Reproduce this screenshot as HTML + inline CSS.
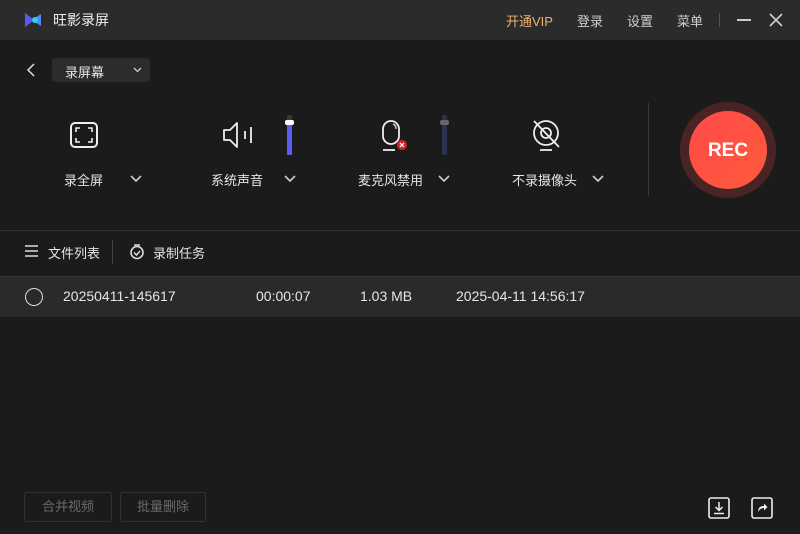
<!DOCTYPE html>
<html><head><meta charset="utf-8"><style>
*{margin:0;padding:0;box-sizing:border-box}
body{width:800px;height:534px;background:#1b1b1b;font-family:"Liberation Sans","Noto Sans CJK SC",sans-serif;color:#e6e6e6;position:relative;overflow:hidden;font-size:13px}
.a{position:absolute;white-space:nowrap}
.title{left:0;top:0;width:800px;height:40px;background:#2b2b2b}
svg{position:absolute;overflow:visible}
.chev{width:10px;height:6px}
</style></head><body>
<div class="a title"></div>
<svg style="left:24px;top:12px" width="18" height="16" viewBox="0 0 18 16"><path d="M1 1 L1 15 L9 9 L9 7Z" fill="#5a5cf0"/><path d="M17 2 L17 14 L9 9 L9 7Z" fill="#4a8cf5"/><circle cx="11" cy="8" r="3" fill="#2fd2ee"/></svg>
<div class="a" style="left:53px;top:10px;font-size:14px;color:#f0f0f0">旺影录屏</div>
<div class="a" style="left:506px;top:11px;color:#e9b56e">开通VIP</div>
<div class="a" style="left:577px;top:11px;color:#cfcfcf">登录</div>
<div class="a" style="left:627px;top:11px;color:#cfcfcf">设置</div>
<div class="a" style="left:677px;top:11px;color:#cfcfcf">菜单</div>
<div class="a" style="left:719px;top:13px;width:1px;height:14px;background:#555"></div>
<div class="a" style="left:737px;top:19px;width:14px;height:2px;background:#ccc"></div>
<svg style="left:769px;top:13px" width="14" height="14"><path d="M1 1L13 13M13 1L1 13" stroke="#ccc" stroke-width="1.6"/></svg>

<svg style="left:27px;top:63px" width="8" height="14"><path d="M7 1L1 7L7 13" stroke="#ddd" stroke-width="1.5" fill="none"/></svg>
<div class="a" style="left:52px;top:58px;width:98px;height:24px;background:#2c2c2c;border-radius:3px"></div>
<div class="a" style="left:65px;top:62px;color:#e6e6e6">录屏幕</div>
<svg style="left:133px;top:67px" width="9" height="6"><path d="M1 1L4.5 4.5L8 1" stroke="#ccc" stroke-width="1.3" fill="none"/></svg>

<!-- full screen -->
<svg style="left:70px;top:122px" width="28" height="26"><rect x="1" y="1" width="26" height="24" rx="4" stroke="#eee" stroke-width="2" fill="none"/><path d="M6 10V6H10M18 6H22V10M22 16V20H18M10 20H6V16" stroke="#eee" stroke-width="1.6" fill="none"/></svg>
<div class="a" style="left:64px;top:170px">录全屏</div>
<svg style="left:130px;top:175px" width="12" height="8"><path d="M1 1L6 6L11 1" stroke="#ccc" stroke-width="1.6" fill="none"/></svg>

<!-- sound -->
<svg style="left:222px;top:121px" width="32" height="28"><path d="M2 9H8L15 2V26L8 19H2Z" stroke="#eee" stroke-width="1.8" fill="none" stroke-linejoin="round"/><path d="M23 10V18M29 6V22" stroke="#eee" stroke-width="1.8"/></svg>
<div class="a" style="left:287px;top:115px;width:5px;height:40px;background:#3a3a3a;border-radius:2px"></div>
<div class="a" style="left:287px;top:123px;width:5px;height:32px;background:#5b5ef0"></div>
<div class="a" style="left:285px;top:120px;width:9px;height:5px;background:#fff;border-radius:2px"></div>
<div class="a" style="left:211px;top:170px">系统声音</div>
<svg style="left:284px;top:175px" width="12" height="8"><path d="M1 1L6 6L11 1" stroke="#ccc" stroke-width="1.6" fill="none"/></svg>

<!-- mic -->
<svg style="left:382px;top:120px" width="24" height="32"><rect x="1" y="1" width="16" height="23" rx="8" stroke="#eee" stroke-width="1.8" fill="none"/><path d="M11 4Q14 5 14 9" stroke="#eee" stroke-width="1.2" fill="none"/><path d="M1 30H13" stroke="#eee" stroke-width="1.8"/><circle cx="20" cy="25" r="5" fill="#d8202a"/><path d="M18 23L22 27M22 23L18 27" stroke="#fff" stroke-width="1.2"/></svg>
<div class="a" style="left:442px;top:115px;width:5px;height:40px;background:#2d3154;border-radius:2px"></div>
<div class="a" style="left:440px;top:120px;width:9px;height:5px;background:#666;border-radius:2px"></div>
<div class="a" style="left:358px;top:170px">麦克风禁用</div>
<svg style="left:438px;top:175px" width="12" height="8"><path d="M1 1L6 6L11 1" stroke="#ccc" stroke-width="1.6" fill="none"/></svg>

<!-- camera -->
<svg style="left:532px;top:120px" width="30" height="32"><circle cx="14" cy="13" r="12" stroke="#eee" stroke-width="1.8" fill="none"/><circle cx="14" cy="13" r="5" stroke="#eee" stroke-width="1.8" fill="none"/><path d="M8 30H20" stroke="#eee" stroke-width="1.8"/><path d="M2 1L27 27" stroke="#eee" stroke-width="1.8"/></svg>
<div class="a" style="left:512px;top:170px">不录摄像头</div>
<svg style="left:592px;top:175px" width="12" height="8"><path d="M1 1L6 6L11 1" stroke="#ccc" stroke-width="1.6" fill="none"/></svg>

<div class="a" style="left:648px;top:103px;width:1px;height:93px;background:#3a3a3a"></div>
<div class="a" style="left:680px;top:102px;width:96px;height:96px;border-radius:50%;background:#4a2424"></div>
<div class="a" style="left:689px;top:111px;width:78px;height:78px;border-radius:50%;background:linear-gradient(135deg,#ff4a4a,#ff5a3a)"></div>
<div class="a" style="left:689px;top:140px;width:78px;text-align:center;font-size:19px;font-weight:bold;color:#fff">REC</div>

<div class="a" style="left:0;top:230px;width:800px;height:1px;background:#333"></div>
<svg style="left:25px;top:245px" width="13" height="12"><path d="M0 1H13M0 6H13M0 11H13" stroke="#ddd" stroke-width="1.6"/></svg>
<div class="a" style="left:48px;top:243px">文件列表</div>
<div class="a" style="left:112px;top:240px;width:1px;height:24px;background:#444"></div>
<svg style="left:129px;top:243px" width="16" height="17"><circle cx="8" cy="9.5" r="6" stroke="#ddd" stroke-width="1.6" fill="none"/><path d="M5 2H11M5 9.5L7.5 12L11 8" stroke="#ddd" stroke-width="1.5" fill="none"/></svg>
<div class="a" style="left:153px;top:243px">录制任务</div>

<div class="a" style="left:0;top:276px;width:800px;height:41px;background:#2a2a2a;border-top:1px solid #383838"></div>
<div class="a" style="left:25px;top:288px;width:18px;height:18px;border:1.5px solid #ddd;border-radius:50%"></div>
<div class="a" style="left:63px;top:288px;font-size:14px">20250411-145617</div>
<div class="a" style="left:256px;top:288px;font-size:14px">00:00:07</div>
<div class="a" style="left:360px;top:288px;font-size:14px">1.03 MB</div>
<div class="a" style="left:456px;top:288px;font-size:14px">2025-04-11 14:56:17</div>

<div class="a" style="left:24px;top:492px;width:88px;height:30px;border:1px solid #333;border-radius:3px;color:#6a6a6a;text-align:center;line-height:28px">合并视频</div>
<div class="a" style="left:120px;top:492px;width:86px;height:30px;border:1px solid #333;border-radius:3px;color:#6a6a6a;text-align:center;line-height:28px">批量删除</div>
<svg style="left:708px;top:497px" width="22" height="22"><rect x="1" y="1" width="20" height="20" rx="2" stroke="#eee" stroke-width="1.6" fill="none"/><path d="M11 5V13M7.5 10L11 13.5L14.5 10M6 16.5H16" stroke="#eee" stroke-width="1.5" fill="none"/></svg>
<svg style="left:751px;top:497px" width="22" height="22"><rect x="1" y="1" width="20" height="20" rx="2" stroke="#eee" stroke-width="1.6" fill="none"/><path d="M7 15Q7 9 13 9V6.5L16.5 10L13 13.5V11Q9 11 7 15Z" fill="#eee"/></svg>
</body></html>
